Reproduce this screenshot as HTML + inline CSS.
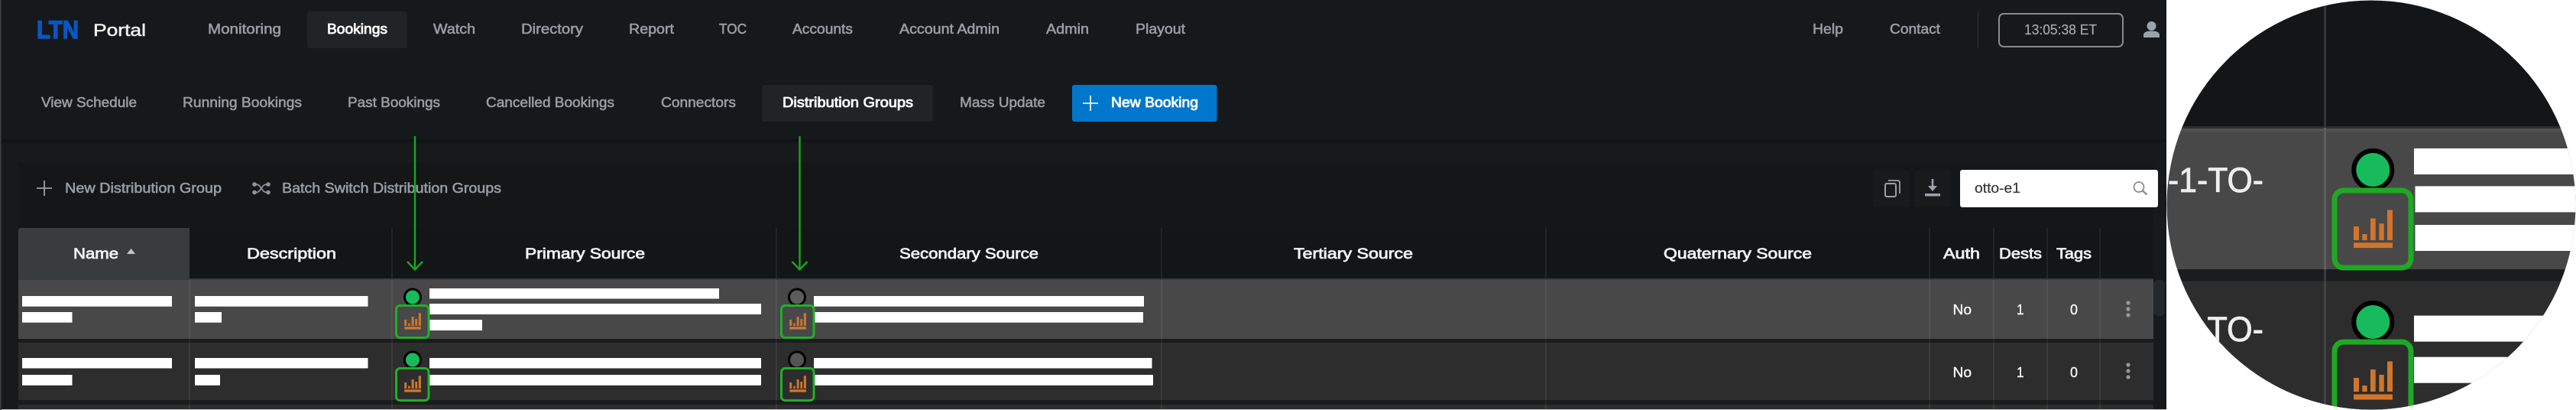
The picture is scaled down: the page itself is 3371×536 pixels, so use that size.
<!DOCTYPE html>
<html><head><meta charset="utf-8"><style>
html,body{margin:0;padding:0;background:#fff;width:3371px;height:536px;overflow:hidden}
svg{display:block}
text{font-family:"Liberation Sans",sans-serif;filter:blur(.35px)}
.n{font-size:18px;fill:#989ea5;stroke:#989ea5;stroke-width:.55}
.a{font-size:18px;fill:#fff;stroke:#fff;stroke-width:.8}
.h{font-size:19px;fill:#f4f4f4;stroke:#f4f4f4;stroke-width:.7}
.c{font-size:18px;fill:#f4f4f4;stroke:#f4f4f4;stroke-width:.4}
.b{fill:#fff}
.g{stroke:#595959;stroke-width:1.3}
.hg{stroke:#2b2d2f;stroke-width:1.3}
.org{fill:#d2752a}
.box{fill:none;stroke:#1fb026;stroke-width:3}
</style></head><body>
<svg xmlns="http://www.w3.org/2000/svg" width="3371" height="536" viewBox="0 0 3371 536">
<defs>
<clipPath id="lens"><circle cx="3103" cy="268" r="267.5"/></clipPath>
<g id="bars">
<rect x="529.2" y="418" width="3" height="8" class="org"/>
<rect x="534.1" y="422.6" width="2.6" height="3.4" class="org"/>
<rect x="538.6" y="414" width="3" height="12" class="org"/>
<rect x="543.3" y="417" width="2.8" height="9" class="org"/>
<rect x="547.8" y="409.3" width="3.1" height="16.7" class="org"/>
<rect x="529.2" y="427.2" width="21.7" height="3.4" class="org"/>
</g>
<g id="dots" fill="#8f9aa5"><circle cx="2785" cy="396" r="2.6"/><circle cx="2785" cy="404" r="2.6"/><circle cx="2785" cy="412" r="2.6"/></g>
</defs>

<!-- backgrounds -->
<rect x="0" y="0" width="2835" height="536" fill="#15191b"/>
<rect x="0" y="0" width="1.6" height="536" fill="#3c3e40"/>
<rect x="2" y="182" width="2833" height="4" fill="#111314"/>
<rect x="2" y="186" width="2833" height="350" fill="#18191b"/>
<rect x="24" y="213" width="2794" height="323" fill="#141618"/>

<!-- logo -->
<text x="48" y="50" font-size="32" font-weight="bold" fill="#0a56c4" stroke="#0a56c4" stroke-width="1.4" textLength="55" lengthAdjust="spacingAndGlyphs">LTN</text>
<text x="122" y="47" font-size="22" fill="#f0f0f0" stroke="#f0f0f0" stroke-width=".5" textLength="69" lengthAdjust="spacingAndGlyphs">Portal</text>

<!-- top nav -->
<rect x="402" y="15" width="130.500" height="48" rx="3" fill="#212426"/>
<text class="n" x="272" y="44" textLength="96" lengthAdjust="spacingAndGlyphs">Monitoring</text>
<text class="a" x="428" y="44" textLength="79" lengthAdjust="spacingAndGlyphs">Bookings</text>
<text class="n" x="567" y="44" textLength="55" lengthAdjust="spacingAndGlyphs">Watch</text>
<text class="n" x="682" y="44" textLength="81" lengthAdjust="spacingAndGlyphs">Directory</text>
<text class="n" x="823" y="44" textLength="59" lengthAdjust="spacingAndGlyphs">Report</text>
<text class="n" x="941" y="44" textLength="36" lengthAdjust="spacingAndGlyphs">TOC</text>
<text class="n" x="1037" y="44" textLength="79" lengthAdjust="spacingAndGlyphs">Accounts</text>
<text class="n" x="1177" y="44" textLength="131" lengthAdjust="spacingAndGlyphs">Account Admin</text>
<text class="n" x="1369" y="44" textLength="56" lengthAdjust="spacingAndGlyphs">Admin</text>
<text class="n" x="1486" y="44" textLength="65" lengthAdjust="spacingAndGlyphs">Playout</text>
<text class="n" x="2372" y="44" textLength="40" lengthAdjust="spacingAndGlyphs">Help</text>
<text class="n" x="2473" y="44" textLength="66" lengthAdjust="spacingAndGlyphs">Contact</text>
<rect x="2588" y="15" width="1.2" height="48" fill="#303336"/>
<rect x="2616" y="18" width="162" height="43" rx="6" fill="none" stroke="#868b8f" stroke-width="2"/>
<text x="2649" y="45" font-size="18" fill="#a3a8ad" stroke="#a3a8ad" stroke-width=".2" textLength="95" lengthAdjust="spacingAndGlyphs">13:05:38 ET</text>
<circle cx="2815.500" cy="34" r="6" fill="#9aa3ab"/>
<path d="M2805 49v-3c0-4 4-5.500 10.500-5.500s10.500 1.500 10.500 5.500v3z" fill="#9aa3ab"/>

<!-- sub nav -->
<text class="n" x="54" y="140" textLength="125" lengthAdjust="spacingAndGlyphs">View Schedule</text>
<text class="n" x="239" y="140" textLength="156" lengthAdjust="spacingAndGlyphs">Running Bookings</text>
<text class="n" x="455" y="140" textLength="121" lengthAdjust="spacingAndGlyphs">Past Bookings</text>
<text class="n" x="636" y="140" textLength="168" lengthAdjust="spacingAndGlyphs">Cancelled Bookings</text>
<text class="n" x="865" y="140" textLength="98" lengthAdjust="spacingAndGlyphs">Connectors</text>
<rect x="997" y="111" width="224" height="48" rx="3" fill="#212426"/>
<text class="a" x="1024" y="140" textLength="171" lengthAdjust="spacingAndGlyphs">Distribution Groups</text>
<text class="n" x="1256" y="140" textLength="112" lengthAdjust="spacingAndGlyphs">Mass Update</text>
<rect x="1403" y="111" width="189.500" height="48" rx="3" fill="#0077cc"/>
<path d="M1417 135h20M1427 125v20" stroke="#e8f2fa" stroke-width="1.800" fill="none"/>
<text class="a" x="1454" y="140" textLength="114" lengthAdjust="spacingAndGlyphs">New Booking</text>

<!-- toolbar -->
<path d="M48 246h20M58 236v20" stroke="#9ba1a7" stroke-width="1.800" fill="none"/>
<text class="n" x="85" y="252" textLength="205" lengthAdjust="spacingAndGlyphs">New Distribution Group</text>
<g fill="#8f959b"><circle cx="333" cy="241" r="2.800"/><circle cx="333" cy="251.500" r="2.800"/><circle cx="351" cy="241" r="2.800"/><circle cx="351" cy="251.500" r="2.800"/></g>
<path d="M335 241C342 241 342 251.500 349 251.500M335 251.500C342 251.500 342 241 349 241" fill="none" stroke="#8f959b" stroke-width="1.700"/>
<text class="n" x="369" y="252" textLength="287" lengthAdjust="spacingAndGlyphs">Batch Switch Distribution Groups</text>
<rect x="2452" y="222" width="47" height="49" rx="3" fill="#181a1c"/>
<rect x="2505" y="222" width="47" height="49" rx="3" fill="#181a1c"/>
<rect x="2467" y="240" width="14" height="17" rx="2" fill="none" stroke="#9ba1a7" stroke-width="2"/>
<path d="M2471 236h12q3 0 3 3v14" fill="none" stroke="#9ba1a7" stroke-width="1.800"/>
<path d="M2529 234v14" stroke="#9ba1a7" stroke-width="2.600"/>
<path d="M2523 243h12l-6 7z" fill="#9ba1a7"/>
<rect x="2519" y="253" width="20" height="3.500" fill="#9ba1a7"/>
<rect x="2565" y="222" width="259" height="49" rx="3" fill="#fff"/>
<text x="2584" y="252" font-size="18" fill="#333" stroke="#333" stroke-width=".2" textLength="60" lengthAdjust="spacingAndGlyphs">otto-e1</text>
<circle cx="2799" cy="244.500" r="6.500" fill="none" stroke="#8d8d8d" stroke-width="1.800"/>
<path d="M2804 249.500l5.500 5" stroke="#8d8d8d" stroke-width="2.400"/>

<!-- table header -->
<rect x="24" y="298" width="2794" height="66" fill="#131517"/>
<path d="M24 364v-63q0-3 3-3h221v66z" fill="#3a3b3d"/>
<text class="h" x="96" y="338" textLength="59" lengthAdjust="spacingAndGlyphs">Name</text>
<path d="M166 332l5.500-7 5.500 7z" fill="#c4c4c4"/>
<text class="h" x="323" y="338" textLength="117" lengthAdjust="spacingAndGlyphs">Description</text>
<text class="h" x="687" y="338" textLength="157" lengthAdjust="spacingAndGlyphs">Primary Source</text>
<text class="h" x="1177" y="338" textLength="182" lengthAdjust="spacingAndGlyphs">Secondary Source</text>
<text class="h" x="1693" y="338" textLength="156" lengthAdjust="spacingAndGlyphs">Tertiary Source</text>
<text class="h" x="2177" y="338" textLength="194" lengthAdjust="spacingAndGlyphs">Quaternary Source</text>
<text class="h" x="2543" y="338" textLength="48" lengthAdjust="spacingAndGlyphs">Auth</text>
<text class="h" x="2616" y="338" textLength="56" lengthAdjust="spacingAndGlyphs">Dests</text>
<text class="h" x="2691" y="338" textLength="46" lengthAdjust="spacingAndGlyphs">Tags</text>
<g class="hg">
<path d="M513 298v66M1016 298v66M1520 298v66M2023 298v66M2525 298v66M2609 298v66M2679 298v66M2748 298v66"/>
</g>

<!-- rows -->
<rect x="24" y="364" width="2794" height="172" fill="#1a1c1d"/>
<rect x="24" y="364" width="2794" height="2" fill="#3a3b3c"/>
<rect x="24" y="366" width="2794" height="77" fill="#484848"/>
<rect x="24" y="448" width="2794" height="75" fill="#2d2d2d"/>
<rect x="24" y="529" width="2794" height="6" fill="#2d2d2d"/>
<rect x="2" y="535" width="2833" height="1" fill="#d0d0d0"/>
<g class="g">
<path d="M248 366v77M513 366v77M1016 366v77M1520 366v77M2023 366v77M2525 366v77M2609 366v77M2679 366v77M2748 366v77"/>
</g>
<g stroke="#454545" stroke-width="1.300">
<path d="M248 448v75M513 448v75M1016 448v75M1520 448v75M2023 448v75M2525 448v75M2609 448v75M2679 448v75M2748 448v75"/>
<path d="M248 529v6M513 529v6M1016 529v6M1520 529v6M2023 529v6M2525 529v6M2609 529v6M2679 529v6M2748 529v6"/>
</g>
<g stroke="#2a2c2d" stroke-width="1.300">
<path d="M248 443v5M513 443v5M1016 443v5M1520 443v5M2023 443v5M2525 443v5M2609 443v5M2679 443v5M2748 443v5M248 523v6M513 523v6M1016 523v6M1520 523v6M2023 523v6M2525 523v6M2609 523v6M2679 523v6M2748 523v6"/>
</g>
<rect x="2818" y="366" width="15" height="47" rx="6" fill="#25282a"/>

<!-- redaction bars row 1 -->
<rect class="b" x="29" y="387" width="196" height="13.700"/>
<rect class="b" x="29" y="408" width="65.500" height="13.700"/>
<rect class="b" x="255" y="387" width="226.500" height="13.700"/>
<rect class="b" x="255" y="408" width="35" height="13.700"/>
<rect class="b" x="562" y="377" width="379" height="13.500"/>
<rect class="b" x="562" y="397" width="434" height="14"/>
<rect class="b" x="562" y="418" width="69" height="14"/>
<rect class="b" x="1065" y="387" width="432" height="13.700"/>
<rect class="b" x="1066" y="408" width="430" height="13.700"/>
<!-- redaction bars row 2 -->
<rect class="b" x="29" y="468" width="196" height="13.500"/>
<rect class="b" x="29" y="490" width="65.500" height="13.800"/>
<rect class="b" x="255" y="468" width="226.500" height="13.500"/>
<rect class="b" x="255" y="490" width="33" height="13.800"/>
<rect class="b" x="562" y="468" width="434" height="13.500"/>
<rect class="b" x="562" y="490" width="434" height="13.800"/>
<rect class="b" x="1065" y="468" width="442.500" height="13.500"/>
<rect class="b" x="1066" y="490" width="443" height="13.800"/>

<!-- status + icon: primary -->
<circle cx="540" cy="388.500" r="10.500" fill="#17bb5c" stroke="#000" stroke-width="3"/>
<rect class="box" x="518.500" y="399.500" width="42.500" height="42" rx="5"/>
<use href="#bars"/>
<circle cx="540" cy="470.500" r="10.500" fill="#17bb5c" stroke="#000" stroke-width="3"/>
<rect class="box" x="518.500" y="481.500" width="42.500" height="42" rx="5"/>
<use href="#bars" y="82"/>
<!-- status + icon: secondary -->
<circle cx="1043" cy="388.500" r="10.500" fill="#5c5c5c" stroke="#000" stroke-width="3"/>
<rect class="box" x="1022.500" y="399.500" width="42.500" height="42" rx="5"/>
<use href="#bars" x="504"/>
<circle cx="1043" cy="470.500" r="10.500" fill="#555" stroke="#000" stroke-width="3"/>
<rect class="box" x="1022.500" y="481.500" width="42.500" height="42" rx="5"/>
<use href="#bars" x="504" y="82"/>

<!-- cells -->
<text class="c" x="2555.500" y="411" textLength="24.500" lengthAdjust="spacingAndGlyphs">No</text>
<text class="c" x="2639" y="411" textLength="9.500" lengthAdjust="spacingAndGlyphs">1</text>
<text class="c" x="2709" y="411" textLength="10" lengthAdjust="spacingAndGlyphs">0</text>
<use href="#dots"/>
<text class="c" x="2555.500" y="493" textLength="24.500" lengthAdjust="spacingAndGlyphs">No</text>
<text class="c" x="2639" y="493" textLength="9.500" lengthAdjust="spacingAndGlyphs">1</text>
<text class="c" x="2709" y="493" textLength="10" lengthAdjust="spacingAndGlyphs">0</text>
<use href="#dots" y="81"/>

<!-- arrows -->
<g fill="none" stroke="#17a81f" stroke-width="2.400">
<path d="M543 178v174M533 342l10 10.500 10-10.500"/>
<path d="M1046.500 178v174M1036.500 342l10 10.500 10-10.500"/>
</g>

<!-- white outside -->
<rect x="2835" y="0" width="536" height="536" fill="#fff"/>

<!-- magnifier -->
<g clip-path="url(#lens)">
<rect x="2835" y="0" width="536" height="167" fill="#141517"/>
<rect x="2835" y="165" width="536" height="3" fill="#2c2d2e"/>
<rect x="2835" y="168" width="536" height="184" fill="#484848"/>
<rect x="2835" y="168" width="536" height="3.500" fill="#525252"/>
<rect x="2835" y="352" width="536" height="15.500" fill="#1a1c1d"/>
<rect x="2835" y="367.500" width="536" height="168.500" fill="#2d2d2d"/>
<rect x="3041" y="0" width="3" height="167" fill="#333435"/>
<rect x="3041" y="167" width="3" height="185" fill="#5f5f5f"/>
<rect x="3041" y="352" width="3" height="16" fill="#37393a"/>
<rect x="3041" y="368" width="3" height="168" fill="#444"/>
<text x="2837" y="251" font-size="45" fill="#eee" stroke="#eee" stroke-width=".8" textLength="125" lengthAdjust="spacingAndGlyphs">-1-TO-</text>
<text x="2888.500" y="446" font-size="45" fill="#eee" stroke="#eee" stroke-width=".8" textLength="73.500" lengthAdjust="spacingAndGlyphs">TO-</text>
<rect class="b" x="3159" y="194" width="212" height="34"/>
<rect class="b" x="3160.500" y="243.400" width="210" height="34"/>
<rect class="b" x="3160.500" y="294" width="210" height="34"/>
<rect class="b" x="3159" y="412.600" width="212" height="34"/>
<rect class="b" x="3159" y="466.700" width="212" height="34"/>
<circle cx="3105.300" cy="222" r="25" fill="#17bb5c" stroke="#000" stroke-width="6"/>
<rect x="3055" y="249" width="100" height="101" rx="12" fill="#484848" stroke="#1fa824" stroke-width="7"/>
<circle cx="3105.300" cy="421" r="25" fill="#17bb5c" stroke="#000" stroke-width="6"/>
<rect x="3055" y="447" width="100" height="101" rx="12" fill="#2d2d2d" stroke="#1fa824" stroke-width="7"/>
<g class="org">
<rect x="3080" y="296" width="7" height="18"/><rect x="3091.300" y="306" width="6.300" height="8"/><rect x="3102" y="285.500" width="6.700" height="28.500"/><rect x="3113.400" y="292.300" width="6.300" height="21.700"/><rect x="3124" y="274.500" width="7" height="39.500"/><rect x="3080" y="317.300" width="51" height="6.800"/>
<rect x="3080" y="494" width="7" height="18"/><rect x="3091.300" y="504" width="6.300" height="8"/><rect x="3102" y="483" width="6.700" height="29"/><rect x="3113.400" y="490" width="6.300" height="22"/><rect x="3124" y="472.500" width="7" height="39.500"/><rect x="3080" y="515.500" width="51" height="7"/>
</g>
</g>
</svg>
</body></html>
